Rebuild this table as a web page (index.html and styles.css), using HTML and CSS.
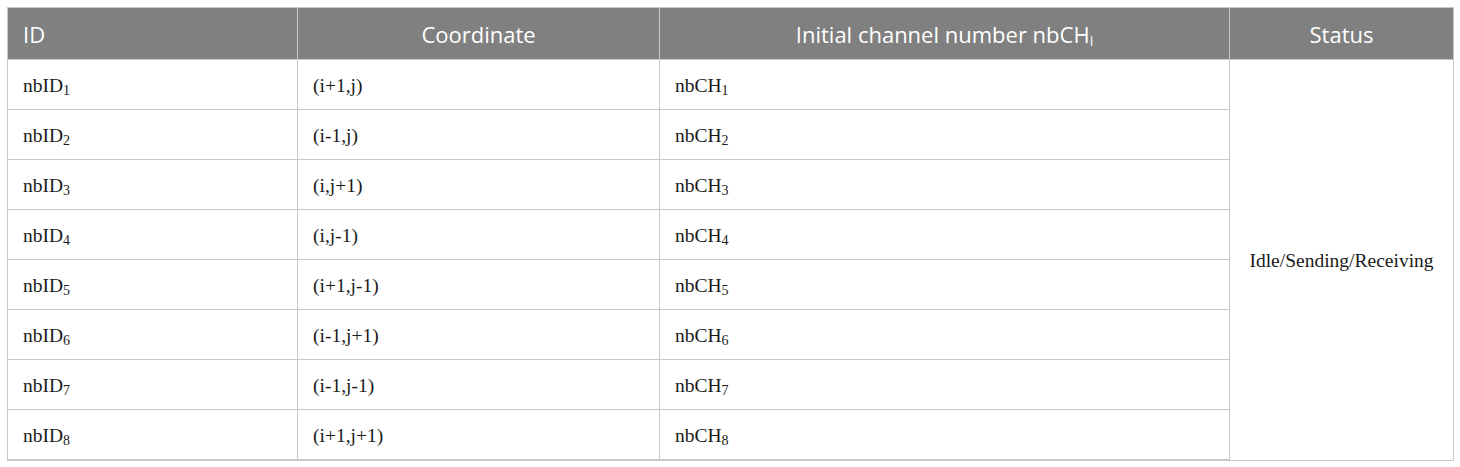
FILE: index.html
```html
<!DOCTYPE html>
<html>
<head>
<meta charset="utf-8">
<link rel="stylesheet" href="styles.css">
</head>
<body>
<div class="wrap">
<table class="grid">
  <colgroup>
    <col class="c1"><col class="c2"><col class="c3"><col class="c4">
  </colgroup>
  <thead>
    <tr>
      <th class="left">ID</th>
      <th>Coordinate</th>
      <th>Initial channel number nbCH<sub>i</sub></th>
      <th>Status</th>
    </tr>
  </thead>
  <tbody>
    <tr><td>nbID<sub>1</sub></td><td>(i+1,j)</td><td>nbCH<sub>1</sub></td><td class="status" rowspan="8">Idle/Sending/Receiving</td></tr>
    <tr><td>nbID<sub>2</sub></td><td>(i-1,j)</td><td>nbCH<sub>2</sub></td></tr>
    <tr><td>nbID<sub>3</sub></td><td>(i,j+1)</td><td>nbCH<sub>3</sub></td></tr>
    <tr><td>nbID<sub>4</sub></td><td>(i,j-1)</td><td>nbCH<sub>4</sub></td></tr>
    <tr><td>nbID<sub>5</sub></td><td>(i+1,j-1)</td><td>nbCH<sub>5</sub></td></tr>
    <tr><td>nbID<sub>6</sub></td><td>(i-1,j+1)</td><td>nbCH<sub>6</sub></td></tr>
    <tr><td>nbID<sub>7</sub></td><td>(i-1,j-1)</td><td>nbCH<sub>7</sub></td></tr>
    <tr class="last"><td>nbID<sub>8</sub></td><td>(i+1,j+1)</td><td>nbCH<sub>8</sub></td></tr>
  </tbody>
</table>
</div>
</body>
</html>
```
FILE: styles.css
```css
html, body {
  margin: 0;
  padding: 0;
  background: #ffffff;
}
.wrap {
  padding: 7px 0 0 7px;
}
.grid {
  border-collapse: collapse;
  table-layout: fixed;
  width: 1446px;
  border: 1px solid #c8c8c8;
}
.c1 { width: 290px; }
.c2 { width: 362px; }
.c3 { width: 570px; }
.c4 { width: 224px; }
.grid th {
  background: #7f807f;
  color: #ffffff;
  font-family: "Open Sans", "Noto Sans", sans-serif;
  font-weight: 400;
  font-size: 22px;
  height: 52px;
  padding: 0 15px;
  text-align: center;
  vertical-align: middle;
  border: 1px solid #c8c8c8;
  box-sizing: border-box;
}
.grid th.left {
  text-align: left;
}
.grid th sub {
  font-size: 14px;
  vertical-align: -3px;
  line-height: 0;
}
.grid td {
  font-family: "Liberation Serif", "Times New Roman", serif;
  font-size: 19.5px;
  line-height: 24px;
  color: #1a1a1a;
  height: 47px;
  padding: 2px 15px 0 15px;
  text-align: left;
  vertical-align: middle;
  border: 1px solid #c8c8c8;
}
.grid td sub {
  font-size: 14px;
  vertical-align: -3px;
  line-height: 0;
}
.grid td.status {
  text-align: center;
}
.grid tr.last td {
  border-bottom: 2px solid #c8c8c8;
}
```
